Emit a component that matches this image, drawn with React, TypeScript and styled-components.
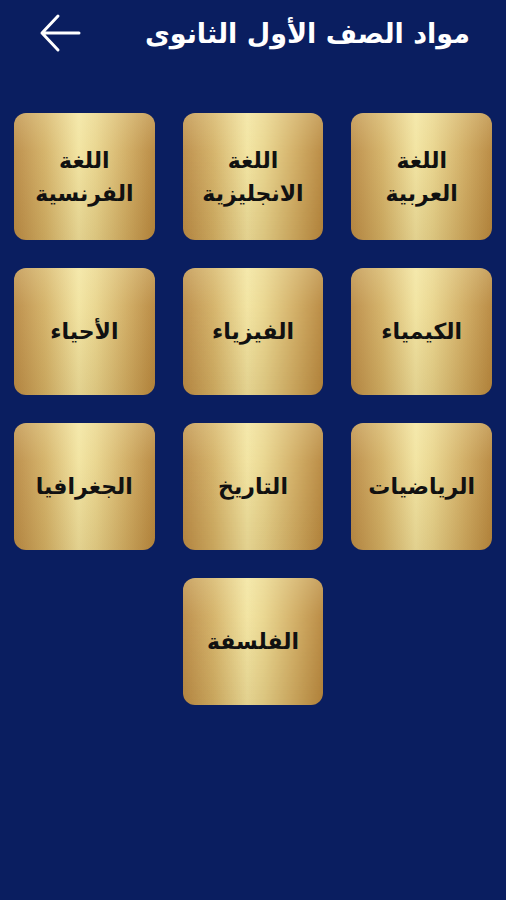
import React from "react";
import styled, { createGlobalStyle } from "styled-components";

const Global = createGlobalStyle`
  html, body { margin: 0; padding: 0; background: #0a1e60; }
  body { font-family: "DejaVu Sans", "Noto Sans", sans-serif; }
`;

const Screen = styled.div`
  width: 506px;
  height: 900px;
  background: #0a1e60;
  display: flex;
  flex-direction: column;
`;

const Header = styled.header`
  height: 66px;
  display: flex;
  align-items: center;
  justify-content: space-between;
  padding: 0 36px 0 38px;
  box-sizing: border-box;
`;

const Title = styled.h1`
  margin: 0;
  color: #ffffff;
  font-family: "DejaVu Sans", sans-serif;
  font-weight: bold;
  font-size: 27px;
  direction: rtl;
`;

const BackButton = styled.button`
  background: none;
  border: none;
  padding: 0;
  width: 44px;
  height: 44px;
  display: flex;
  align-items: center;
  justify-content: center;
  cursor: pointer;
`;

const Grid = styled.div`
  direction: rtl;
  display: grid;
  grid-template-columns: repeat(3, 1fr);
  grid-auto-rows: 127px;
  column-gap: 28px;
  row-gap: 28px;
  padding: 47px 14px 0 14px;
`;

const Tile = styled.button<{ $col?: number }>`
  ${(p) => (p.$col ? `grid-column: ${p.$col};` : "")}
  border: none;
  border-radius: 12px;
  background:
    linear-gradient(180deg, rgba(255,250,215,0.22) 0%, rgba(255,255,255,0.04) 30%, rgba(110,70,15,0.12) 100%),
    linear-gradient(90deg, #bb8c47 0%, #d4b267 22%, #f2e4a0 46%, #e9d58d 58%, #d1ad63 80%, #b8883f 100%);
  display: flex;
  align-items: center;
  justify-content: center;
  padding: 0 6px;
  cursor: pointer;
`;

const Label = styled.span`
  direction: rtl;
  color: #111;
  font-family: "DejaVu Sans", sans-serif;
  font-weight: bold;
  font-size: 22px;
  line-height: 33px;
  text-align: center;
  white-space: pre-line;
`;

const subjects: { name: string; col?: number }[] = [
  { name: "اللغة\nالعربية" },
  { name: "اللغة\nالانجليزية" },
  { name: "اللغة\nالفرنسية" },
  { name: "الكيمياء" },
  { name: "الفيزياء" },
  { name: "الأحياء" },
  { name: "الرياضيات" },
  { name: "التاريخ" },
  { name: "الجغرافيا" },
  { name: "الفلسفة", col: 2 },
];

export default function App() {
  return (
    <Screen>
      <Global />
      <Header>
        <BackButton aria-label="back">
          <svg width="42" height="40" viewBox="0 0 42 40" fill="none">
            <path d="M40 20 H3 M19 3 L3 20 L19 37" stroke="#fff" strokeWidth="3" strokeLinecap="round" strokeLinejoin="round" />
          </svg>
        </BackButton>
        <Title>مواد الصف الأول الثانوى</Title>
      </Header>
      <Grid>
        {subjects.map((s) => (
          <Tile key={s.name} $col={s.col}>
            <Label>{s.name}</Label>
          </Tile>
        ))}
      </Grid>
    </Screen>
  );
}
